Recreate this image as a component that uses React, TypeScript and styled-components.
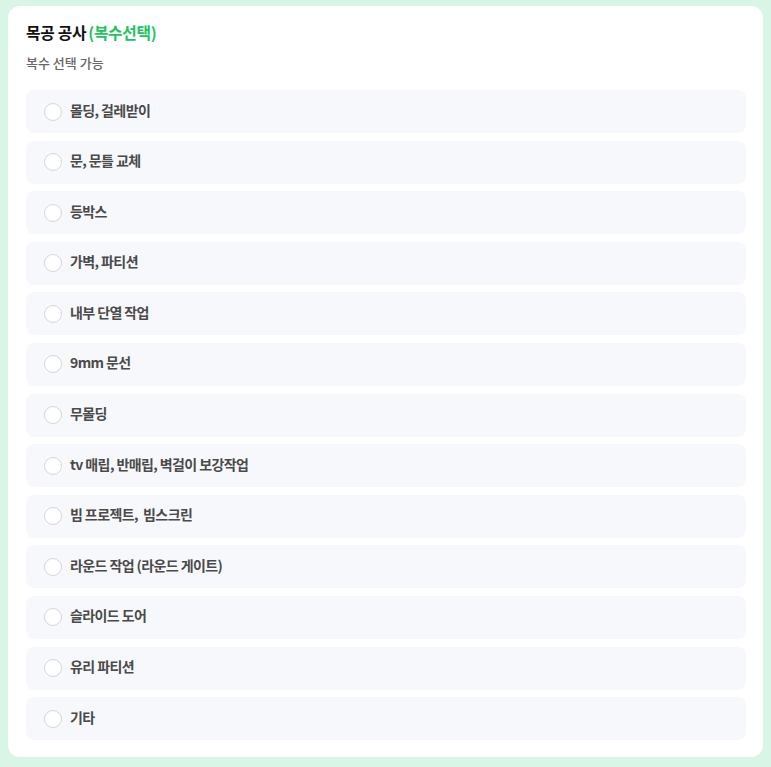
import React from "react";
import styled, { createGlobalStyle } from "styled-components";

const GlobalStyle = createGlobalStyle`
  html, body {
    margin: 0;
    padding: 0;
    background: #d9f5e5;
  }
  body {
    font-family: "Noto Sans CJK KR", "Noto Sans", sans-serif;
  }
  * { box-sizing: border-box; }
`;

const Page = styled.div`
  padding: 6px 8px 10px 8px;
  min-height: 767px;
`;

const Card = styled.section`
  background: #ffffff;
  border-radius: 12px;
  padding: 17px 17px 17px 18px;
  display: flex;
  flex-direction: column;
`;

const Title = styled.h2`
  margin: 0;
  font-size: 15.8px;
  line-height: 20px;
  font-weight: 700;
  color: #111111;
  letter-spacing: -0.3px;
`;

const Accent = styled.span`
  color: #22c35e;
  margin-left: 2px;
`;

const Subtitle = styled.p`
  margin: 11px 0 0 0;
  font-size: 13px;
  line-height: 18px;
  font-weight: 500;
  color: #666666;
`;

const List = styled.ul`
  list-style: none;
  margin: 18px 0 0 0;
  padding: 0;
  display: flex;
  flex-direction: column;
  gap: 7.6px;
`;

const Row = styled.li`
  background: #f7f8fb;
  border-radius: 8px;
  height: 43px;
  padding: 0 18px;
  display: flex;
  align-items: center;
  gap: 8px;
  cursor: pointer;
`;

const Radio = styled.span`
  width: 18px;
  height: 18px;
  border-radius: 50%;
  border: 1px solid #d6d7db;
  background: #ffffff;
  flex-shrink: 0;
`;

const Label = styled.span`
  font-size: 14px;
  line-height: 20px;
  margin-bottom: 4px;
  font-weight: 700;
  color: #4a4a4a;
  letter-spacing: -0.6px;
  white-space: pre;
`;

const items = [
  "몰딩, 걸레받이",
  "문, 문틀 교체",
  "등박스",
  "가벽, 파티션",
  "내부 단열 작업",
  "9mm 문선",
  "무몰딩",
  "tv 매립, 반매립, 벽걸이 보강작업",
  "빔 프로젝트,  빔스크린",
  "라운드 작업 (라운드 게이트)",
  "슬라이드 도어",
  "유리 파티션",
  "기타",
];

export default function App() {
  return (
    <>
      <GlobalStyle />
      <Page>
        <Card>
          <Title>
            목공 공사<Accent>(복수선택)</Accent>
          </Title>
          <Subtitle>복수 선택 가능</Subtitle>
          <List>
            {items.map((it) => (
              <Row key={it}>
                <Radio />
                <Label>{it}</Label>
              </Row>
            ))}
          </List>
        </Card>
      </Page>
    </>
  );
}
